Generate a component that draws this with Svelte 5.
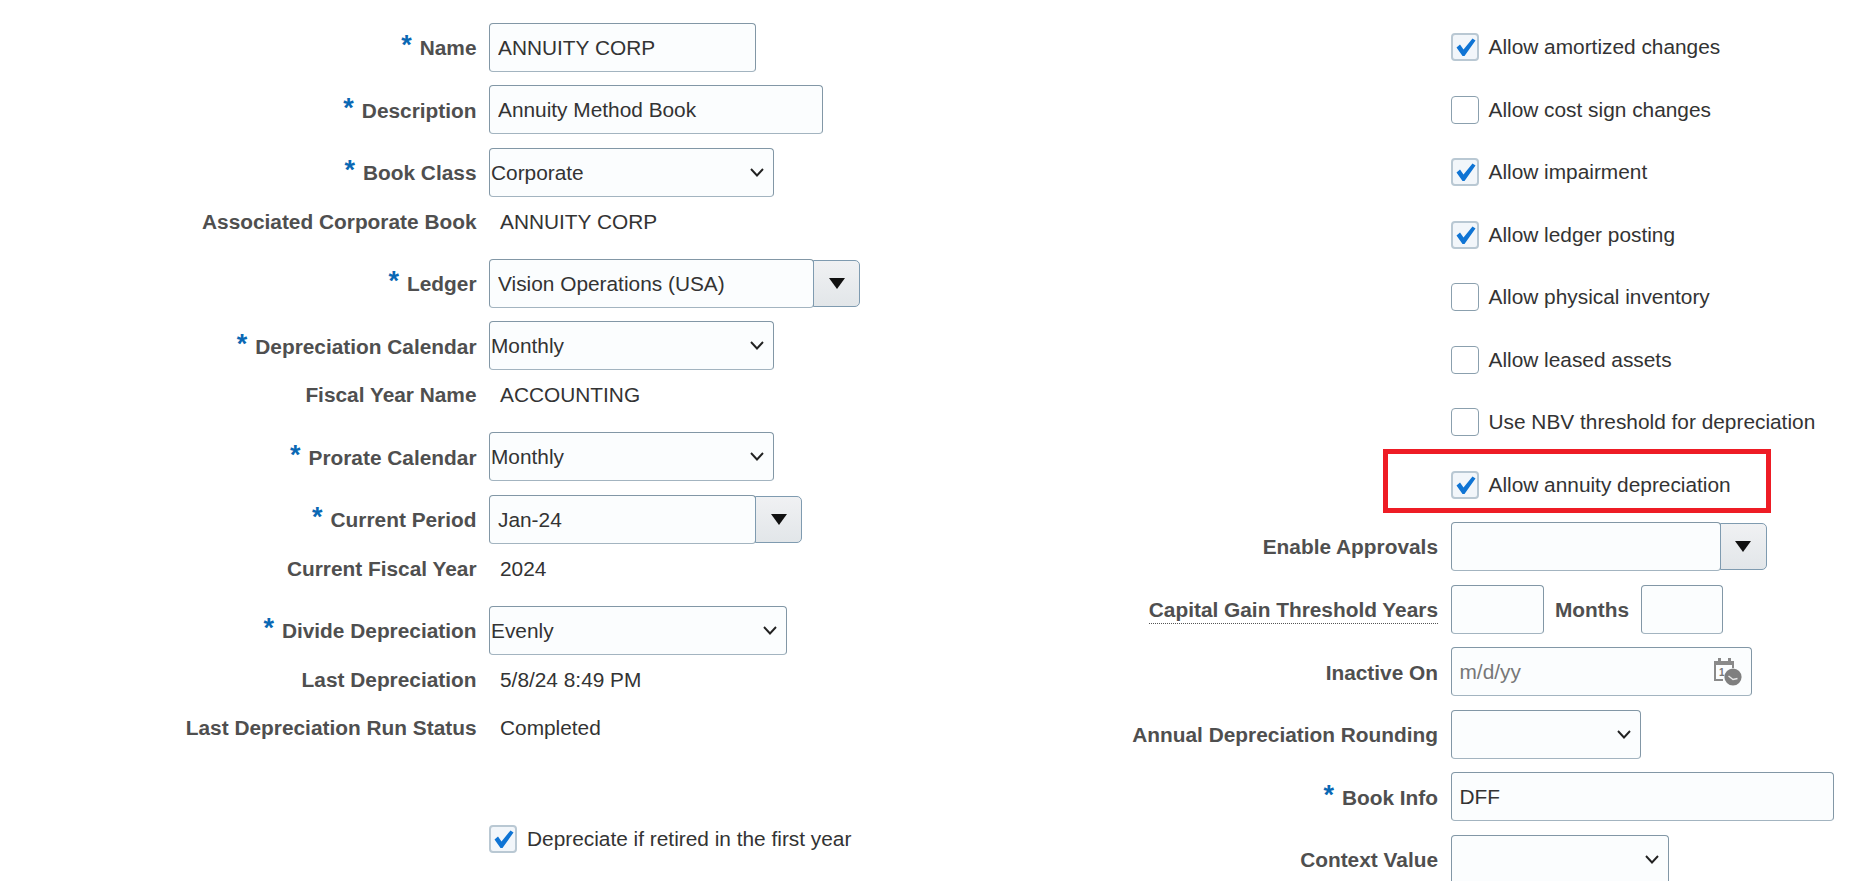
<script>
    const left = [
        { label: "Name", req: true, kind: "input", value: "ANNUITY CORP", w: 267 },
        { label: "Description", req: true, kind: "input", value: "Annuity Method Book", w: 334 },
        { label: "Book Class", req: true, kind: "select", value: "Corporate", w: 285 },
        { label: "Associated Corporate Book", kind: "text", value: "ANNUITY CORP" },
        { label: "Ledger", req: true, kind: "lov", value: "Vision Operations (USA)", w: 325 },
        { label: "Depreciation Calendar", req: true, kind: "select", value: "Monthly", w: 285 },
        { label: "Fiscal Year Name", kind: "text", value: "ACCOUNTING" },
        { label: "Prorate Calendar", req: true, kind: "select", value: "Monthly", w: 285 },
        { label: "Current Period", req: true, kind: "lov", value: "Jan-24", w: 267 },
        { label: "Current Fiscal Year", kind: "text", value: "2024" },
        { label: "Divide Depreciation", req: true, kind: "select", value: "Evenly", w: 298 },
        { label: "Last Depreciation", kind: "text", value: "5/8/24 8:49 PM" },
        { label: "Last Depreciation Run Status", kind: "text", value: "Completed" }
    ];

    const flags = [
        { label: "Allow amortized changes", checked: true },
        { label: "Allow cost sign changes", checked: false },
        { label: "Allow impairment", checked: true },
        { label: "Allow ledger posting", checked: true },
        { label: "Allow physical inventory", checked: false },
        { label: "Allow leased assets", checked: false },
        { label: "Use NBV threshold for depreciation", checked: false },
        { label: "Allow annuity depreciation", checked: true }
    ];
</script>

{#snippet check(label, checked)}
    <label class="check">
        <span class="box" class:on={checked}>
            {#if checked}
                <svg viewBox="0 0 27 27" width="27" height="27">
                    <path d="M4.5 13.5 L8 10.5 L11.5 15.5 L20.5 4.5 L23.5 6.5 L12.5 22 L10.5 22 Z" fill="#0f74d4" />
                </svg>
            {/if}
        </span>
        <span>{label}</span>
    </label>
{/snippet}

{#snippet chevron()}
    <svg class="chev" viewBox="0 0 14 9" width="14" height="9">
        <path d="M1 1 L7 7.5 L13 1" fill="none" stroke="#222" stroke-width="1.9" />
    </svg>
{/snippet}

{#snippet lovButton()}
    <span class="lov-btn">
        <svg viewBox="0 0 16 11" width="16" height="11"><path d="M0 0 H16 L8 11 Z" fill="#111" /></svg>
    </span>
{/snippet}

<div class="page">
    <section class="col left">
        {#each left as row}
            <div class="row" class:ro={row.kind === "text"}>
                <div class="lbl">
                    {#if row.req}<span class="req">*</span>{/if}{row.label}
                </div>
                {#if row.kind === "input"}
                    <input class="field" style="width:{row.w}px" value={row.value} />
                {:else if row.kind === "select"}
                    <div class="sel" style="width:{row.w}px">
                        <select><option>{row.value}</option></select>
                        {@render chevron()}
                    </div>
                {:else if row.kind === "lov"}
                    <div class="lov">
                        <input class="field" style="width:{row.w}px" value={row.value} />
                        {@render lovButton()}
                    </div>
                {:else}
                    <div class="val">{row.value}</div>
                {/if}
            </div>
        {/each}
        <div class="row retired">
            <div class="lbl"></div>
            {@render check("Depreciate if retired in the first year", true)}
        </div>
    </section>

    <section class="col right">
        {#each flags as flag}
            <div class="row">
                <div class="lbl"></div>
                {@render check(flag.label, flag.checked)}
            </div>
        {/each}

        <div class="row approvals">
            <div class="lbl">Enable Approvals</div>
            <div class="lov">
                <input class="field" style="width:270px" />
                {@render lovButton()}
            </div>
        </div>
        <div class="row">
            <div class="lbl"><span class="dotted">Capital Gain Threshold Years</span></div>
            <input class="field" style="width:93px" />
            <div class="lbl months">Months</div>
            <input class="field" style="width:82px" />
        </div>
        <div class="row">
            <div class="lbl">Inactive On</div>
            <div class="date">
                <input class="field" style="width:301px" placeholder="m/d/yy" />
                <svg class="cal" viewBox="0 0 29 28" width="29" height="28">
                    <path d="M5 0 h3 v3 h7 v-3 h3 v3 h3 v7 h-2 v-3 H3 v14 h7 v2 H1 V3 h4 Z" fill="#8a8a8a" />
                    <path d="M1 3 H21 V7 H1 Z" fill="#8a8a8a" />
                    <text x="6" y="18" font-size="10" font-weight="700" fill="#777" font-family="Liberation Sans, sans-serif">1</text>
                    <circle cx="20" cy="19" r="8.6" fill="#7f7f7f" />
                    <path d="M15.5 18 L20 21.5 L24.5 20.5" fill="none" stroke="#e8e8e8" stroke-width="1.4" />
                </svg>
            </div>
        </div>
        <div class="row">
            <div class="lbl">Annual Depreciation Rounding</div>
            <div class="sel" style="width:190px">
                <select><option></option></select>
                {@render chevron()}
            </div>
        </div>
        <div class="row">
            <div class="lbl"><span class="req">*</span>Book Info</div>
            <input class="field" style="width:383px" value="DFF" />
        </div>
        <div class="row">
            <div class="lbl">Context Value</div>
            <div class="sel" style="width:218px">
                <select><option></option></select>
                {@render chevron()}
            </div>
        </div>
    </section>

    <div class="highlight"></div>
</div>

<style>
    :global(body) {
        background: #fff;
    }
    .page {
        position: relative;
        display: flex;
        width: 1864px;
        height: 881px;
        overflow: hidden;
        font-family: "Liberation Sans", Arial, sans-serif;
        font-size: 20.85px;
        color: #333;
    }
    .col {
        padding-top: 9px;
    }
    .left {
        width: 932px;
        --label: 476.5px;
    }
    .right {
        flex: 1;
        --label: 506px;
    }
    .row {
        display: flex;
        align-items: center;
        height: 48.5px;
        margin-top: 14px;
    }
    .row.ro {
        margin-top: 0;
    }
    .row.retired {
        margin-top: 74px;
        height: 27px;
    }
    .row.approvals {
        margin-top: 12px;
        height: 50px;
    }
    .lbl {
        flex: none;
        width: var(--label);
        margin-right: 12.5px;
        padding-top: 2px;
        text-align: right;
        font-weight: 700;
        color: #4f4f4f;
        white-space: nowrap;
    }
    .months {
        width: auto;
        margin: 0 11.5px;
    }
    .dotted {
        border-bottom: 1px dotted #555;
        padding-bottom: 2px;
    }
    .req {
        position: relative;
        top: -1px;
        margin-right: 8px;
        font-size: 27px;
        line-height: 0;
        color: #0a68b4;
    }
    .val {
        padding: 2px 0 0 11px;
    }
    .field,
    select {
        box-sizing: border-box;
        height: 49px;
        margin: 0;
        border: 1px solid #8297a6;
        border-bottom-color: #a3b4c0;
        border-radius: 4px;
        background: #fbfdfe;
        font: inherit;
        color: #333;
        outline: none;
    }
    .field {
        padding: 1px 8px 0;
    }
    .field::placeholder {
        color: #777;
        opacity: 1;
    }
    .sel,
    .date {
        position: relative;
    }
    select {
        display: block;
        width: 100%;
        padding: 0 0 0 1px;
        appearance: none;
    }
    .chev {
        position: absolute;
        top: 20px;
        right: 10px;
        pointer-events: none;
    }
    .lov {
        display: flex;
        align-items: center;
    }
    .lov-btn {
        box-sizing: border-box;
        display: flex;
        align-items: center;
        justify-content: center;
        width: 47px;
        height: 47px;
        margin-left: -1px;
        border: 1px solid #7f9bb0;
        border-radius: 0 5px 5px 0;
        background: linear-gradient(#f0f1f3, #e2e6e9);
    }
    .cal {
        position: absolute;
        top: 11px;
        right: 10px;
    }
    .check {
        display: flex;
        align-items: center;
        gap: 10px;
        color: #333;
    }
    .box {
        box-sizing: border-box;
        flex: none;
        width: 28px;
        height: 28px;
        border: 1px solid #8ba0ae;
        border-radius: 4px;
        background: #fff;
    }
    .box.on {
        border: 2px solid #b9c8d3;
        background: #f2f6fa;
    }
    .box svg {
        display: block;
        margin: -1px;
    }
    .highlight {
        position: absolute;
        left: 1383px;
        top: 449px;
        box-sizing: border-box;
        width: 388px;
        height: 64px;
        border: 5px solid #ee1c25;
    }
</style>
